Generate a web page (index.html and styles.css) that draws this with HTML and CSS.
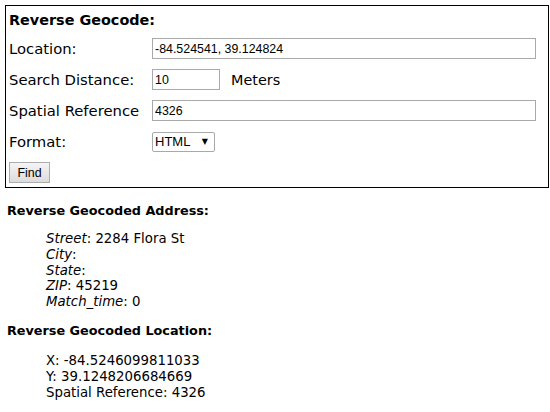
FILE: index.html
```html
<!DOCTYPE html>
<html lang="en">
<head>
    <meta charset="UTF-8">
    <meta name="viewport" content="width=device-width, initial-scale=1.0">
    <title>Reverse Geocode</title>
    <link rel="stylesheet" href="styles.css">
</head>
<body>
    <form class="geocode-form">
        <div class="form-title">Reverse Geocode:</div>

        <div class="form-row">
            <label for="location">Location:</label>
            <input type="text" id="location" class="wide" value="-84.524541, 39.124824">
        </div>

        <div class="form-row">
            <label for="distance">Search Distance:</label>
            <input type="text" id="distance" class="short" value="10">
            <span class="unit">Meters</span>
        </div>

        <div class="form-row">
            <label for="sr">Spatial Reference</label>
            <input type="text" id="sr" class="wide" value="4326">
        </div>

        <div class="form-row">
            <label for="format">Format:</label>
            <div class="select-box">
                <select id="format">
                    <option>HTML</option>
                    <option>JSON</option>
                    <option>PJSON</option>
                </select>
                <span class="select-arrow">&#9660;</span>
            </div>
        </div>

        <div class="button-row">
            <button type="button">Find</button>
        </div>
    </form>

    <h4 class="result-title">Reverse Geocoded Address:</h4>
    <ul class="result-list">
        <li><i>Street</i>: 2284 Flora St</li>
        <li><i>City</i>:</li>
        <li><i>State</i>:</li>
        <li><i>ZIP</i>: 45219</li>
        <li><i>Match_time</i>: 0</li>
    </ul>

    <h4 class="result-title second">Reverse Geocoded Location:</h4>
    <ul class="result-list">
        <li>X: -84.5246099811033</li>
        <li>Y: 39.1248206684669</li>
        <li>Spatial Reference: 4326</li>
    </ul>
</body>
</html>
```

FILE: styles.css
```css
body {
    font-family: "DejaVu Sans", Verdana, sans-serif;
    font-size: 13px;
    color: #000;
    margin: 5px 1px 5px 5px;
}
.geocode-form {
    border: 1px solid #000;
    padding: 0 3px 1px 3px;
}
.form-title {
    font-weight: bold;
    height: 27px;
    display: flex;
    align-items: center;
    font-size: 14.4px;
}
.form-row {
    display: flex;
    align-items: center;
    height: 31px;
    font-size: 14.8px;
}
.form-row label {
    width: 143px;
    flex: none;
}
.form-row input {
    font-family: "Liberation Sans", Arial, sans-serif;
    font-size: 12.4px;
    border: 1px solid #a9a9a9;
    padding: 0 2px;
    height: 21px;
    box-sizing: border-box;
    color: #000;
}
.wide {
    width: 384px;
}
.short {
    width: 68px;
}
.unit {
    margin-left: 11px;
    font-size: 14.4px;
}
.select-box {
    display: flex;
    align-items: center;
    border: 1px solid #a9a9a9;
    border-radius: 2px;
    height: 20px;
    box-sizing: border-box;
    width: 63px;
    padding: 0 6px 0 2px;
}
.select-box select {
    appearance: none;
    -webkit-appearance: none;
    border: none;
    background: none;
    font-family: "Liberation Sans", Arial, sans-serif;
    font-size: 13px;
    padding: 0;
    flex: 1;
    min-width: 0;
    color: #000;
}
.select-arrow {
    font-size: 8px;
}
.button-row {
    height: 29px;
    display: flex;
    align-items: center;
}
button {
    font-family: "Liberation Sans", Arial, sans-serif;
    font-size: 12.4px;
    height: 21px;
    width: 41px;
    padding: 0;
    border: 1px solid #adadad;
    background: linear-gradient(#f4f4f4, #dcdcdc);
    color: #000;
    margin-top: 2px;
}
.result-title {
    font-size: 12.8px;
    margin: 15px 0 12px 2px;
    line-height: 16px;
}
.result-title.second {
    margin-top: 13px;
    margin-bottom: 14px;
}
.result-list {
    list-style: none;
    margin: 0;
    padding-left: 41px;
    font-size: 13.3px;
    line-height: 15.8px;
}
```
